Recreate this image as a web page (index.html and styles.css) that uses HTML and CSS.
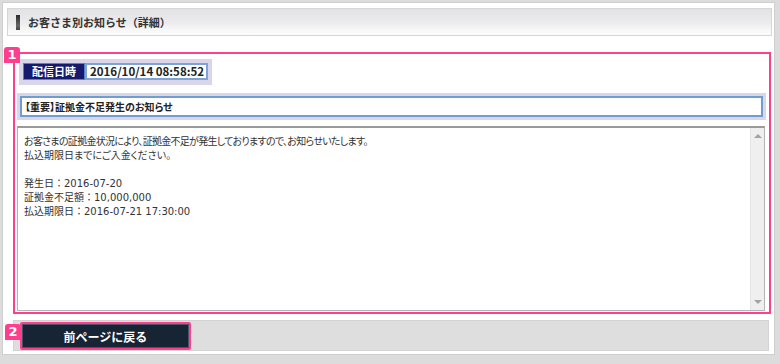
FILE: index.html
```html
<!DOCTYPE html>
<html lang="ja">
<head>
  <meta charset="UTF-8">
  <title>お客さま別お知らせ（詳細）</title>
  <link rel="stylesheet" href="styles.css">
</head>
<body>
  <div class="panel">
    <div class="page-head">
      <span class="mark"></span>
      <h1>お客さま別お知らせ（詳細）</h1>
    </div>

    <div class="notice">
      <div class="date-box">
        <span class="date-label">配信日時</span>
        <span class="date-value">2016/10/14 08:58:52</span>
      </div>

      <div class="subject-box">
        <div class="subject">【重要】証拠金不足発生のお知らせ</div>
      </div>

      <div class="body-box">
        <div class="body-text">
          <p class="tight">お客さまの証拠金状況により、証拠金不足が発生しておりますので、お知らせいたします。</p>
          <p>払込期限日までにご入金ください。</p>
          <p>&nbsp;</p>
          <p class="plain">発生日：2016-07-20</p>
          <p class="plain">証拠金不足額：10,000,000</p>
          <p class="plain">払込期限日：2016-07-21 17:30:00</p>
        </div>
        <div class="scroll">
          <span class="arrow up"></span>
          <span class="arrow down"></span>
        </div>
      </div>
    </div>

    <div class="actions">
      <button class="back">前ページに戻る</button>
    </div>

    <span class="badge badge-1">1</span>
    <span class="badge badge-2">2</span>
  </div>
</body>
</html>
```

FILE: styles.css
```css
body {
  margin: 0;
  padding: 2px 5px 5px 2px;
  background-color: #dcdcdc;
  font-family: "Noto Sans CJK JP", "DejaVu Sans", sans-serif;
  color: #222;
}

.panel {
  position: relative;
  height: 353px;
  box-sizing: border-box;
  background: #fff;
  border: 1px solid #cfcfcf;
  padding: 5px 2px 0 4px;
}

.page-head {
  display: flex;
  align-items: center;
  height: 28px;
  box-sizing: border-box;
  border: 1px solid #d6d6d6;
  background: linear-gradient(#e2e2e5, #ececee 55%, #f7f7f7 80%, #fcfcfc);
  padding-left: 8px;
}

.mark {
  width: 4px;
  height: 15px;
  background: linear-gradient(#2a2a2a, #666 70%, #444);
  margin-right: 8px;
}

h1 {
  margin: 0;
  font-size: 11px;
  font-weight: bold;
  color: #333;
}

.notice {
  margin: 16px 1px 0 6px;
  height: 262px;
  box-sizing: border-box;
  border: 2px solid #ff3f8e;
  padding: 5px 2px 1px 2px;
  display: flex;
  flex-direction: column;
}

.date-box {
  align-self: flex-start;
  display: flex;
  margin-left: 2px;
  padding: 4px 4px 5px 4px;
  background: #d9d6ea;
}

.date-label {
  width: 62px;
  height: 17px;
  box-sizing: border-box;
  border: 1px solid #5b7fc0;
  background: #161a6c;
  color: #fff;
  font-size: 11px;
  font-weight: bold;
  line-height: 15px;
  text-align: center;
}

.date-value {
  width: 123px;
  height: 17px;
  box-sizing: border-box;
  border: 2px solid #7ca4d8;
  background: #fff;
  font-size: 11.5px;
  font-weight: bold;
  line-height: 13px;
  padding-left: 3px;
}

.subject-box {
  margin-top: 8px;
  margin-right: 1px;
  padding: 3px;
  background: #d9d6ea;
}

.subject {
  height: 21px;
  box-sizing: border-box;
  border: 2px solid #6f9cd2;
  background: #fff;
  font-size: 10px;
  font-weight: bold;
  line-height: 17px;
  padding-left: 3px;
  font-feature-settings: "palt";
}

.body-box {
  flex: 1;
  display: flex;
  margin: 6px 2px 0 0;
  border: 1px solid #b4b4b4;
  border-top: 2px solid #9a9a9a;
}

.body-text {
  flex: 1;
  padding: 7px 6px;
  font-family: "DejaVu Sans", "Noto Sans CJK JP", sans-serif;
  font-size: 10px;
  line-height: 14px;
  color: #333;
  font-feature-settings: "palt";
}

.body-text p {
  margin: 0;
}

.body-text .tight {
  letter-spacing: -0.7px;
}

.body-text .plain {
  font-feature-settings: normal;
}

.scroll {
  width: 13px;
  background: #efefef;
  border-left: 1px solid #e4e4e4;
  display: flex;
  flex-direction: column;
  justify-content: space-between;
  align-items: center;
  padding: 6px 0;
}

.arrow {
  width: 0;
  height: 0;
  border-left: 4px solid transparent;
  border-right: 4px solid transparent;
}

.arrow.up {
  border-bottom: 4px solid #a3a3a3;
}

.arrow.down {
  border-top: 4px solid #a3a3a3;
}

.actions {
  margin: 6px 3px 0 6px;
  height: 31px;
  box-sizing: border-box;
  background: #dedede;
  border: 1px solid #d3d3d3;
  padding: 1px 0 0 6px;
}

.back {
  display: block;
  width: 171px;
  height: 28px;
  border: 2px solid #ff3f8e;
  border-radius: 2px;
  background: #172434;
  box-shadow: inset 0 0 0 1px #44546a;
  color: #fff;
  font-family: "Noto Sans CJK JP", sans-serif;
  font-size: 12px;
  font-weight: bold;
  cursor: pointer;
}

.badge {
  position: absolute;
  width: 16px;
  height: 16px;
  background: #ff3f8e;
  border-radius: 3px 3px 0 0;
  color: #fff;
  font-family: "DejaVu Sans", sans-serif;
  font-size: 13px;
  font-weight: bold;
  line-height: 16px;
  text-align: center;
}

.badge-1 {
  left: 1px;
  top: 44px;
}

.badge-2 {
  left: 2px;
  top: 321px;
}
```
